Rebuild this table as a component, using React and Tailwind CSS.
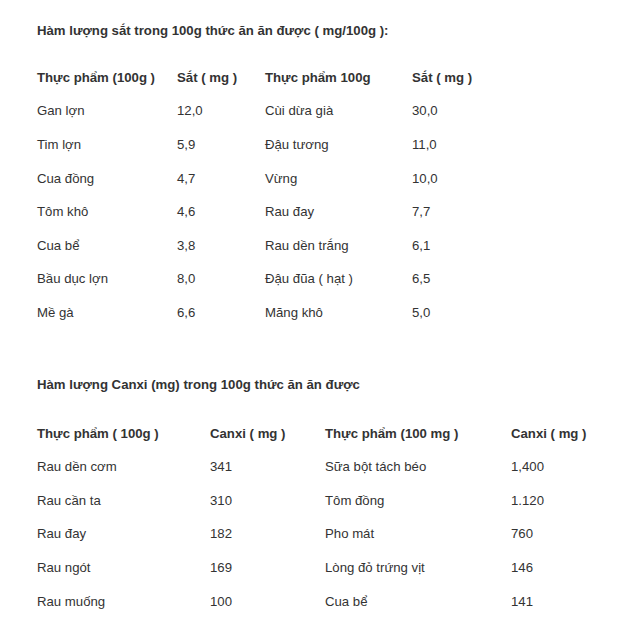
import React from 'react'

const iron = {
  head: ['Thực phẩm (100g )', 'Sắt ( mg )', 'Thực phẩm 100g', 'Sắt ( mg )'],
  rows: [
    ['Gan lợn', '12,0', 'Cùi dừa già', '30,0'],
    ['Tim lợn', '5,9', 'Đậu tương', '11,0'],
    ['Cua đồng', '4,7', 'Vừng', '10,0'],
    ['Tôm khô', '4,6', 'Rau đay', '7,7'],
    ['Cua bể', '3,8', 'Rau dền trắng', '6,1'],
    ['Bầu dục lợn', '8,0', 'Đậu đũa ( hạt )', '6,5'],
    ['Mề gà', '6,6', 'Măng khô', '5,0'],
  ],
}

const calcium = {
  head: ['Thực phẩm ( 100g )', 'Canxi ( mg )', 'Thực phẩm (100 mg )', 'Canxi ( mg )'],
  rows: [
    ['Rau dền cơm', '341', 'Sữa bột tách béo', '1,400'],
    ['Rau cần ta', '310', 'Tôm đồng', '1.120'],
    ['Rau đay', '182', 'Pho mát', '760'],
    ['Rau ngót', '169', 'Lòng đỏ trứng vịt', '146'],
    ['Rau muống', '100', 'Cua bể', '141'],
  ],
}

function Table({ data, cols }) {
  return (
    <div>
      <div className={`grid ${cols} h-[33.6px] items-center font-bold`}>
        {data.head.map((h, i) => <div key={i} className="whitespace-nowrap">{h}</div>)}
      </div>
      {data.rows.map((r, ri) => (
        <div key={ri} className={`grid ${cols} h-[33.6px] items-center`}>
          {r.map((c, i) => <div key={i} className="whitespace-nowrap">{c}</div>)}
        </div>
      ))}
    </div>
  )
}

export default function App() {
  return (
    <div className="w-[632px] h-[624px] bg-white text-[#333] text-[13.2px] leading-4 pl-[37px] overflow-hidden" style={{ fontFamily: '"Liberation Sans", Arial, sans-serif' }}>
      <div className="pt-[23px] font-bold">Hàm lượng sắt trong 100g thức ăn ăn được ( mg/100g ):</div>
      <div className="mt-[22px]">
        <Table data={iron} cols="grid-cols-[140px_88px_147px_1fr]" />
      </div>
      <div className="mt-[47px] font-bold">Hàm lượng Canxi (mg) trong 100g thức ăn ăn được</div>
      <div className="mt-[24px]">
        <Table data={calcium} cols="grid-cols-[173px_115px_186px_1fr]" />
      </div>
    </div>
  )
}
